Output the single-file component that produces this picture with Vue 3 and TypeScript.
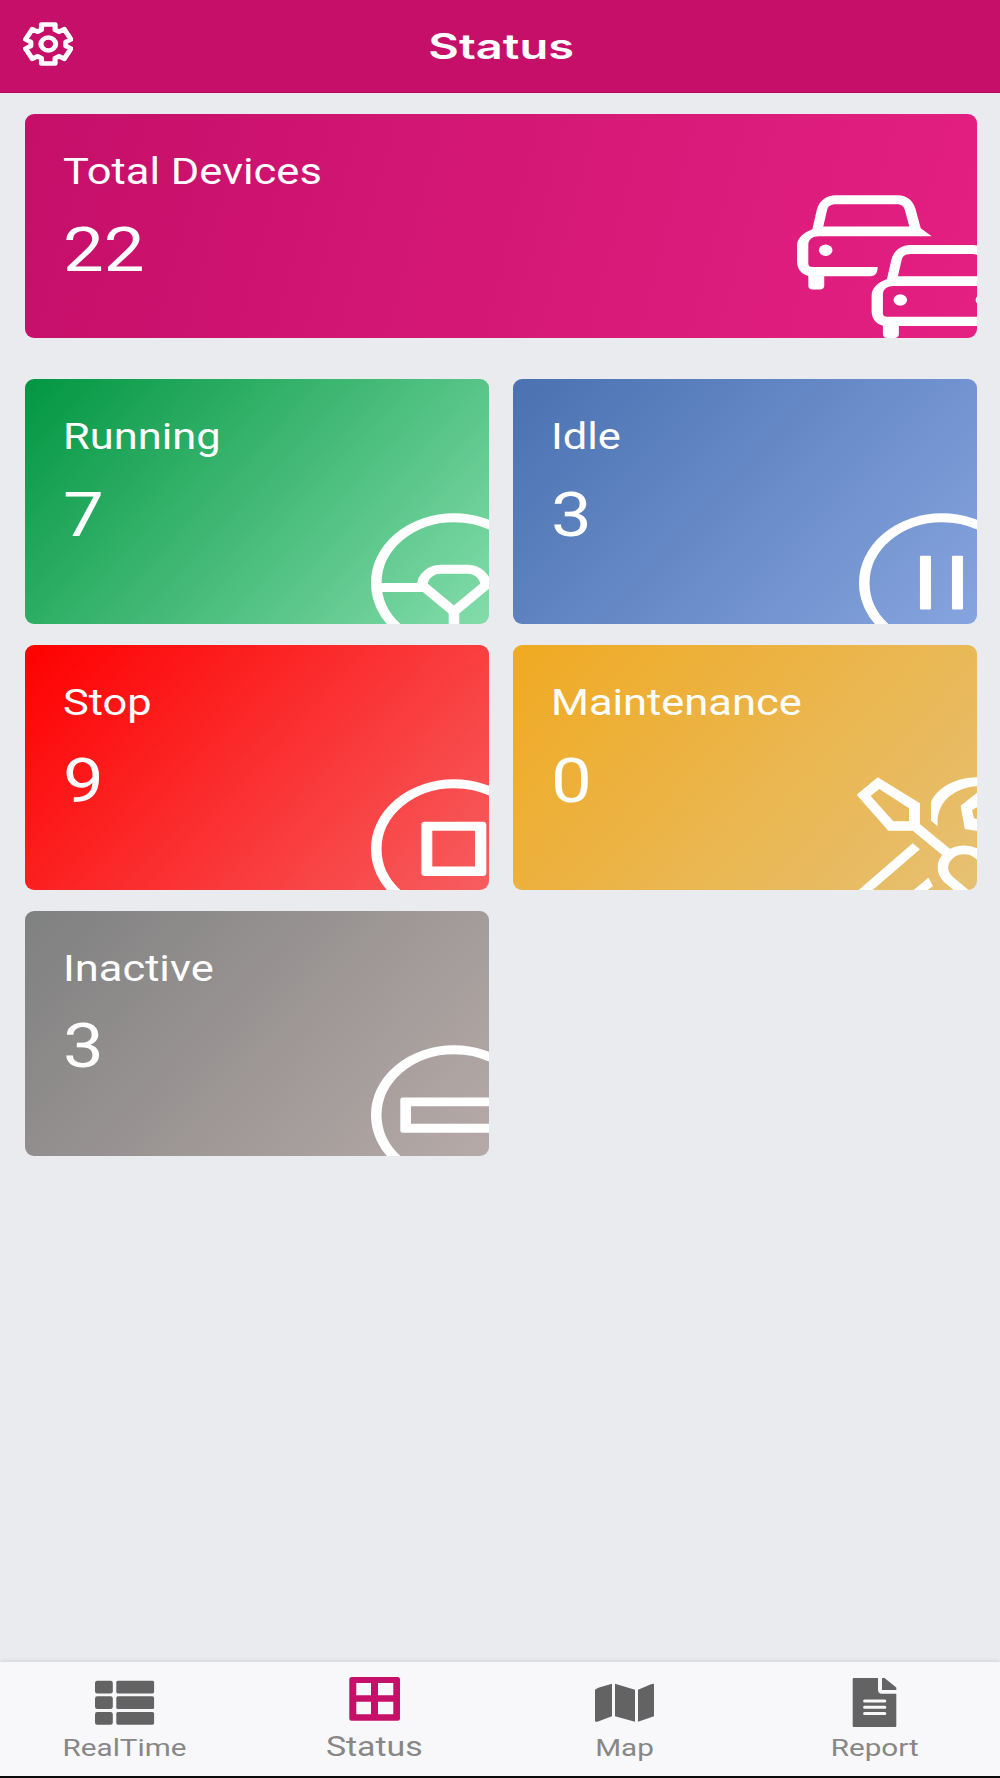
<script setup lang="ts">
type IconName = 'wheel' | 'pause' | 'stop' | 'tools' | 'minus'
type TabIcon = 'list' | 'grid' | 'map' | 'report'

interface StatusCard {
  label: string
  count: number
  icon: IconName
  tone: string
}

interface Tab {
  label: string
  icon: TabIcon
  active?: boolean
}

const totalDevices = 22

const cards: StatusCard[] = [
  { label: 'Running', count: 7, icon: 'wheel', tone: 'running' },
  { label: 'Idle', count: 3, icon: 'pause', tone: 'idle' },
  { label: 'Stop', count: 9, icon: 'stop', tone: 'stopped' },
  { label: 'Maintenance', count: 0, icon: 'tools', tone: 'maintenance' },
  { label: 'Inactive', count: 3, icon: 'minus', tone: 'inactive' },
]

const tabs: Tab[] = [
  { label: 'RealTime', icon: 'list' },
  { label: 'Status', icon: 'grid', active: true },
  { label: 'Map', icon: 'map' },
  { label: 'Report', icon: 'report' },
]

// Outline of a six-toothed gear centred on the origin.
function gearOutline(): string {
  const tooth: [number, number][] = [[-5.9, -14.2], [-5.9, -19.4], [5.9, -19.4], [5.9, -14.2]]
  const points: string[] = []
  for (let k = 0; k < 6; k++) {
    const a = (k * Math.PI) / 3
    for (const [x, y] of tooth) {
      const px = x * Math.cos(a) - y * Math.sin(a)
      const py = x * Math.sin(a) + y * Math.cos(a)
      points.push(`${px.toFixed(2)} ${py.toFixed(2)}`)
    }
  }
  return `M${points.join('L')}Z`
}

const gear = gearOutline()
</script>

<template>
  <div class="screen">
    <header class="topbar">
      <svg class="gear" viewBox="-22 -22 44 44" preserveAspectRatio="none">
        <path :d="gear" />
        <circle r="6.4" />
      </svg>
      <h1 class="title"><span>Status</span></h1>
    </header>

    <main class="content">
      <section class="card total">
        <div class="info">
          <span class="label">Total Devices</span>
          <span class="count">{{ totalDevices }}</span>
        </div>
        <svg class="cars" viewBox="0 0 159.66 150" preserveAspectRatio="none">
          <path
            fill-rule="evenodd"
            d="M121.6 48.2H27C21.5 48.2 17.9 51.5 17.9 57V75.5C17.9 77.8 19 79 21.3 79H76.2C76.2 84.5 74.5 88.3 70 88.3H31.3V97.8C31.3 100.2 30 101.5 27.5 101.5H21.7C19.2 101.5 17.9 100.2 17.9 97.8V88C12 86 8.4 80.5 8.4 73.5V58C8.4 50 13.5 45 21.3 41.3L25 22C27 13 33 7.3 41 7.3H93C101 7.3 106 13 108 21L112.4 40.3ZM30.5 38.5H102.8L99 22C98 18 96 16.3 92 16.3H41C36.5 16.3 34.5 18.5 33.7 22Z"
          />
          <circle cx="32.5" cy="62.3" r="5.7" />
          <g transform="translate(62.7 49.7)">
            <path
              fill-rule="evenodd"
              d="M21.3 41.3L25 22C27 13 33 7.3 41 7.3H93C101 7.3 107 13 109 22L112.7 41.3C120.5 45 125.6 50 125.6 58V73.5C125.6 80.5 122 86 116.1 88V101.5H102.7V88.3H31.3V96.3C31.3 99 30 100.3 27.5 100.3H21.7C19.2 100.3 17.9 99 17.9 96.3V88C12 86 8.4 80.5 8.4 73.5V58C8.4 50 13.5 45 21.3 41.3ZM30.5 38.5H103.5L100.3 22C99.5 18.5 97.5 16.3 93 16.3H41C36.5 16.3 34.5 18.5 33.7 22ZM27 48.2C21.5 48.2 17.9 51.5 17.9 57V75.5C17.9 77.8 19 79 21.3 79H112.7C115 79 116.1 77.8 116.1 75.5V57C116.1 51.5 112.5 48.2 107 48.2Z"
            />
            <circle cx="32.5" cy="62.3" r="5.7" />
            <circle cx="101.5" cy="62.3" r="5.7" />
          </g>
        </svg>
      </section>

      <div class="grid">
        <section v-for="card in cards" :key="card.label" class="card" :class="card.tone">
          <div class="info">
            <span class="label">{{ card.label }}</span>
            <span class="count">{{ card.count }}</span>
          </div>
          <svg class="badge" viewBox="0 0 100.84 115" preserveAspectRatio="none">
            <circle v-if="card.icon !== 'tools'" class="line" cx="71.4" cy="74" r="65.3" />
            <template v-if="card.icon === 'wheel'">
              <path class="line" d="M8 78.5H45M71.4 102V118" />
              <path class="line round" d="M60 60.3H82.8C91 60.3 98 67.5 98 76.3L71.4 102.7L44.8 76.3C44.8 67.5 52 60.3 60 60.3Z" />
            </template>
            <template v-else-if="card.icon === 'pause'">
              <rect x="52.9" y="46.8" width="9.3" height="53.8" rx="1" />
              <rect x="79.8" y="46.8" width="9.3" height="53.8" rx="1" />
            </template>
            <path v-else-if="card.icon === 'stop'" fill-rule="evenodd" d="M47 46.7H95.6Q98.6 46.7 98.6 49.7V98Q98.6 101 95.6 101H47Q44 101 44 98V49.7Q44 46.7 47 46.7ZM53.2 55.7V91.5H89.1V55.7Z" />
            <path v-else-if="card.icon === 'minus'" fill-rule="evenodd" d="M28.3 56.5H114.5Q116.5 56.5 116.5 58.5V89.8Q116.5 91.8 114.5 91.8H28.3Q26.3 91.8 26.3 89.8V58.5Q26.3 56.5 28.3 56.5ZM35.3 65.3V82.8H107.5V65.3Z" />
            <template v-else>
              <path fill-rule="evenodd" d="M17.4 2.3L52.9 28.3V55.7H26.3L-.3 19.7ZM18.7 14L11.5 21L30.5 46.3H43.7V33.3Z" />
              <path class="line" d="M49.4 52L75.5 77.5M96.8 124.4L76.8 104.4A17.7 17.7 0 0 1 101.8 79.4L120 97.6" />
              <path d="M100.9 2.3C84 2.5 69 11 62.2 26.7V45.7L67.8 51.3C66 28 81 12.5 100.9 11.3Z" />
              <path d="M100.9 17.7L87.1 30.7L90.5 54L100.9 56V44L98.3 43.3L96.6 35L100.9 32.3Z" />
              <path d="M46.8 68.3L52.9 74.3L12.9 115.3H1.1ZM59.9 102.7L63.9 111L59.1 115.3H47.3Z" />
            </template>
          </svg>
        </section>
      </div>
    </main>

    <nav class="tabs">
      <a v-for="tab in tabs" :key="tab.label" class="tab" :class="{ active: tab.active }">
        <svg viewBox="0 0 60 52">
          <template v-if="tab.icon === 'list'">
            <g v-for="row in 3" :key="row" :transform="`translate(0 ${4.7 + (row - 1) * 15.65})`">
              <rect width="17.8" height="12.7" rx="2.2" />
              <rect x="21.3" width="37.8" height="12.7" rx="1.6" />
            </g>
          </template>
          <path v-else-if="tab.icon === 'grid'" fill-rule="evenodd" d="M6.8 1H52.5Q55 1 55 3.5V42.2Q55 44.7 52.5 44.7H6.8Q4.3 44.7 4.3 42.2V3.5Q4.3 1 6.8 1ZM11.3 7V19.3H26V7ZM33 7V19.3H48.3V7ZM11.3 25.7V38.3H26V25.7ZM33 25.7V38.3H48.3V25.7Z" />
          <path v-else-if="tab.icon === 'map'" d="M0 13.7Q1 12.5 4 11.4L17 7.7V40.3L3 45.4Q0 46.2 0 45ZM20 7.7L40 13.7V45.7L20 40.3ZM43 13.7L56 8.2Q59 7 59 8.4V40.3L43 45.7Z" />
          <template v-else>
            <path d="M8.7 2H33V14Q33 17.7 36.7 17.7H51.3V50Q51.3 51 50.3 51H8.7Q7.7 51 7.7 50V3Q7.7 2 8.7 2ZM37 2H39.5L51.3 11.5V14H37Z" />
            <path class="rule" d="M19.6 25H39.8M19.6 31.3H39.8M19.6 37.4H39.8" />
          </template>
        </svg>
        <span>{{ tab.label }}</span>
      </a>
    </nav>
  </div>
</template>

<style>
body {
  background: #eaebef;
}
</style>

<style scoped>
.screen {
  display: flex;
  flex-direction: column;
  width: 1000px;
  height: 1778px;
  box-sizing: border-box;
  overflow: hidden;
  background: #eaebef;
  font-family: Roboto, "Liberation Sans", sans-serif;
  border-bottom: 2px solid #0b0b0b;
}

.topbar {
  display: grid;
  grid-template-columns: 96px 1fr 96px;
  align-items: center;
  height: 92.6px;
  flex: none;
  box-sizing: border-box;
  background: #c50f69;
  border-bottom: 1px solid #b3085b;
}

.gear {
  width: 50.6px;
  height: 44px;
  margin: -4px 0 0 22.9px;
  fill: none;
  stroke: #fff;
  stroke-width: 4.5;
  stroke-linejoin: round;
}

.title {
  margin: 0;
  color: #fff;
  font: 600 35px/46px Inter, "Open Sans", sans-serif;
  text-align: center;
}

.title span {
  display: inline-block;
  transform: translateX(1px) scaleX(1.345);
}

.content {
  flex: 1;
  padding: 21.4px 23px 0 25px;
}

.card {
  display: flex;
  justify-content: space-between;
  height: 245px;
  overflow: hidden;
  border-radius: 9px;
  color: #fff;
}

.info {
  display: flex;
  flex-direction: column;
  align-items: flex-start;
  padding: 36px 0 0 37.5px;
}

.label,
.count {
  white-space: nowrap;
  transform-origin: 0 0;
}

.label {
  font-size: 36.5px;
  line-height: 44px;
  transform: scaleX(1.19);
}

.count {
  margin-top: 20.8px;
  font-size: 62px;
  line-height: 70px;
  transform: scaleX(1.17);
}

.cars,
.badge {
  flex: none;
  align-self: flex-end;
  overflow: visible;
  fill: #fff;
}

.cars {
  width: 190px;
  height: 150px;
}

.badge {
  width: 120px;
  height: 115px;
}

.line {
  fill: none;
  stroke: #fff;
  stroke-width: 8.9;
}

.round {
  stroke-linejoin: round;
}

.total {
  height: 224.4px;
  background: linear-gradient(105deg, #c50f69, #e42082);
}

.grid {
  display: grid;
  grid-template-columns: 464px 464px;
  gap: 20.6px 24px;
  margin-top: 41px;
}

.running {
  background: linear-gradient(133deg, #029642, #83dcaa);
}

.idle {
  background: linear-gradient(133deg, #4a71b0, #86a4df);
}

.stopped {
  background: linear-gradient(133deg, #ff0000, #f65e60);
}

.maintenance {
  background: linear-gradient(133deg, #f0aa22, #e6c073);
}

.inactive {
  background: linear-gradient(133deg, #7f8080, #b6aaa8);
}

.tabs {
  display: grid;
  grid-template-columns: repeat(4, 1fr);
  height: 114px;
  flex: none;
  background: #f8f8fa;
  box-shadow: 0 -1px 4px rgba(0, 0, 0, 0.1);
}

.tab {
  display: flex;
  flex-direction: column;
  align-items: center;
  padding-top: 14px;
  color: #878787;
}

.tab svg {
  width: 60px;
  height: 52px;
  fill: #636363;
}

.tab span {
  margin-top: 5px;
  font-size: 24.5px;
  line-height: 30px;
  transform: translateX(-0.7px) scaleX(1.21);
}

.tab.active svg {
  fill: #c50f69;
}

.tab.active span {
  margin-top: 4px;
  font-size: 28px;
}

.rule {
  stroke: #f8f8fa;
  stroke-width: 3;
  stroke-linecap: round;
}
</style>
